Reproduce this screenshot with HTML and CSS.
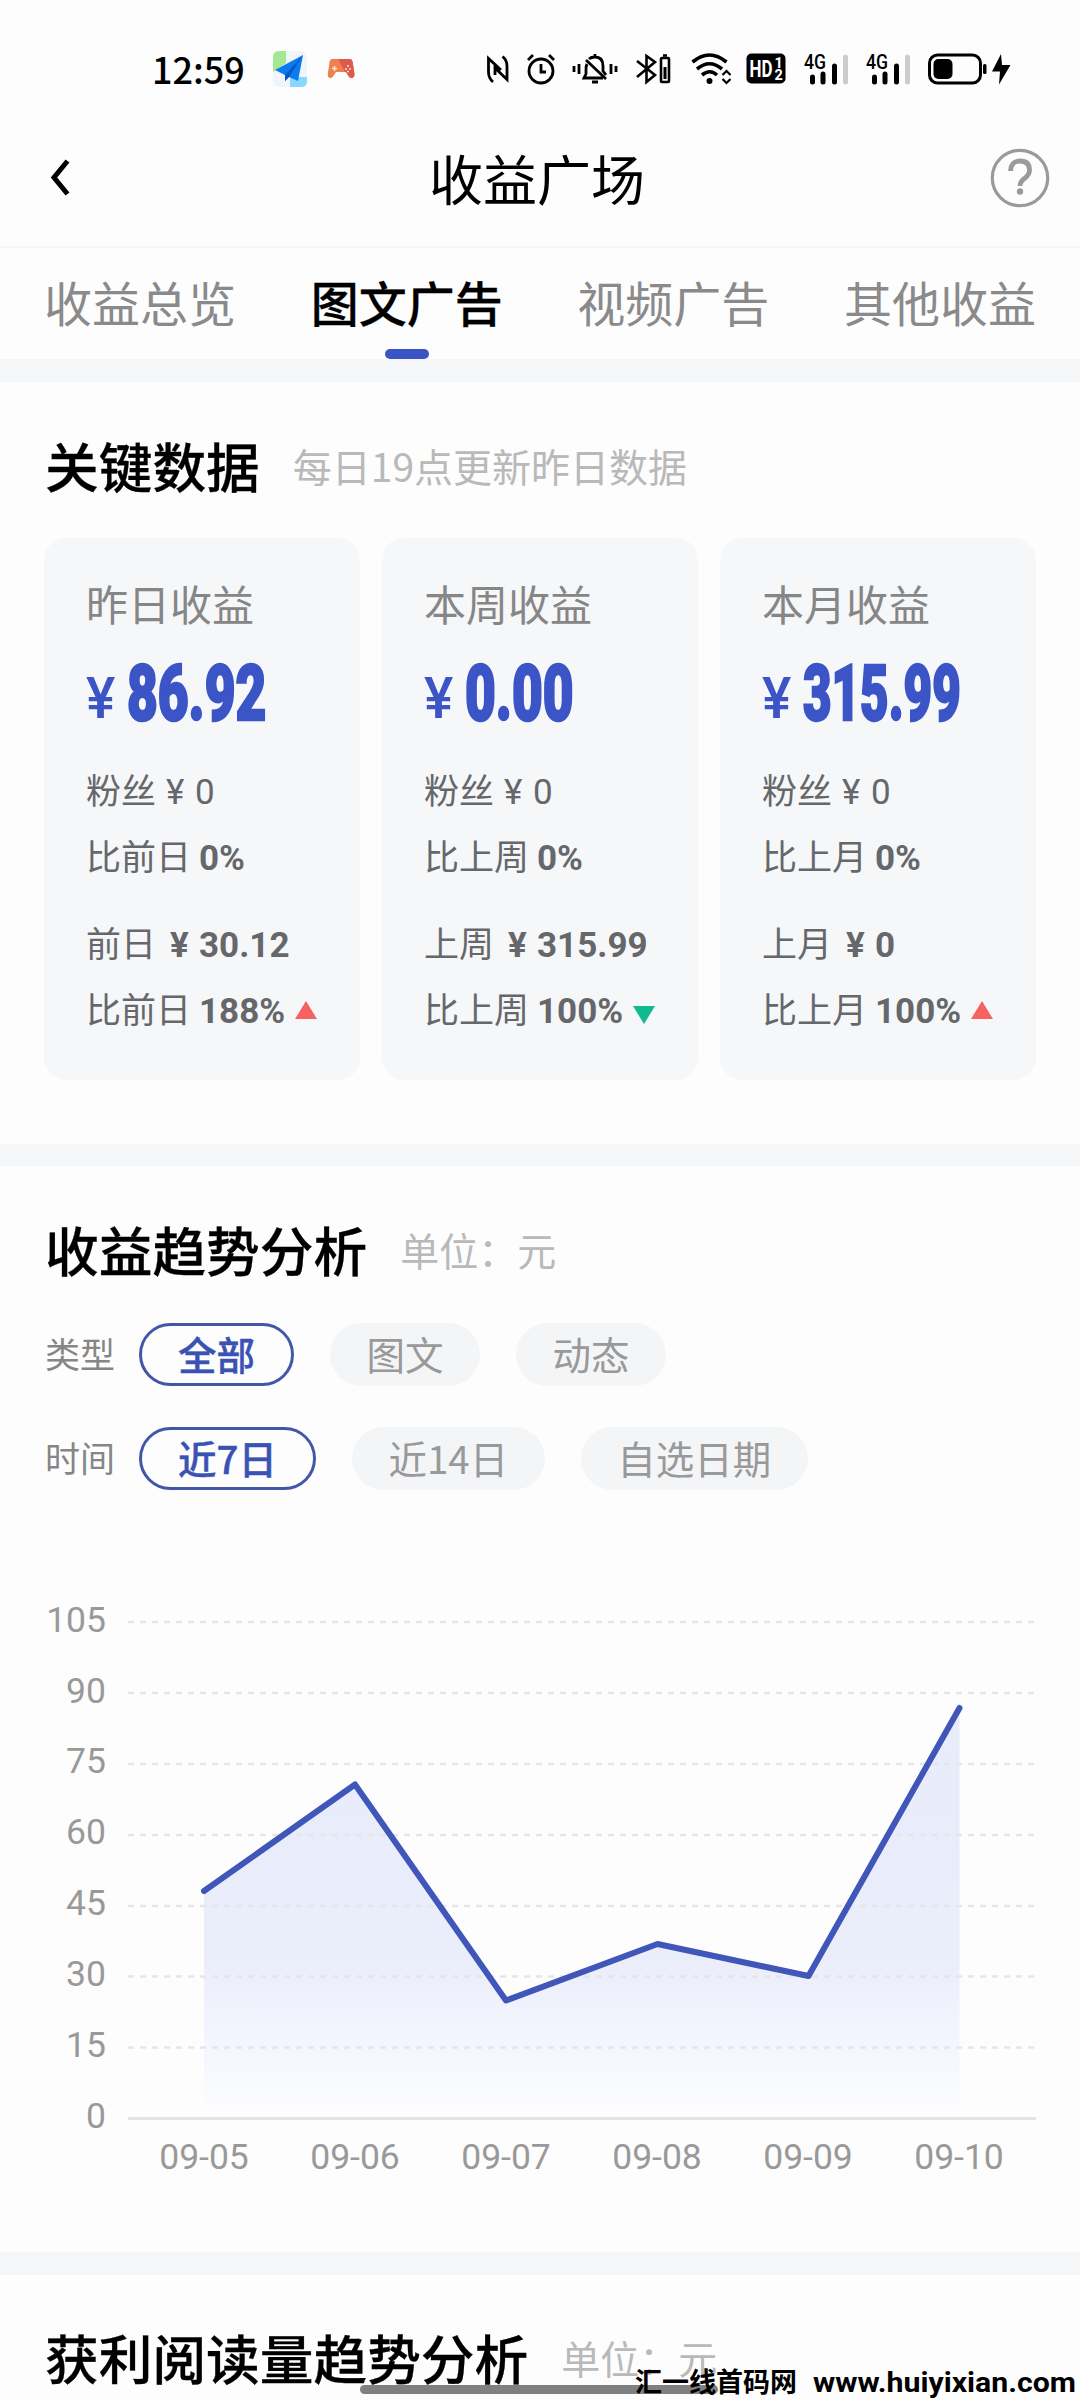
FILE: index.html
```html
<!DOCTYPE html>
<html lang="zh-CN">
<head>
<meta charset="utf-8">
<title>收益广场</title>
<link rel="stylesheet" href="styles.css">
</head>
<body>
<div class="screen">
  <div class="status">
    <span class="clock">12:59</span>
    <svg class="app-plane" width="36" height="38" viewBox="0 0 36 38">
      <rect x="1" y="1" width="34" height="36" rx="6" fill="#f1f5fa"/>
      <path d="M1 22V7q0-6 6-6h7v12z" fill="#a5e892"/>
      <path d="M18 37V27h17v4q0 6-6 6z" fill="#86d9fb"/>
      <path d="M31 5 3 20l10 5v6l4-4 9 4z" fill="#0d7bf0"/>
      <path d="M31 5 13 25v6l4-4z" fill="#0759c4"/>
    </svg>
    <svg class="app-game" width="28" height="22" viewBox="0 0 28 22">
      <path d="M5 1h18q2 0 2.600 2.500L27.500 16q0 4-3 4-2 0-3-2l-2.500-4H9l-3 4.500q-1 1.500-2.500 1.500Q.5 20 .8 16L2.600 3.500Q3 1 5 1z" fill="#ef8052"/>
      <path d="M11 1h12q2 0 2.600 2.500L27.500 16q0 4-3 4-2 0-3-2l-2.500-4h-1z" fill="#dc5a4e"/>
      <path d="M7.500 8v5M5 10.500h5" stroke="#ffe6c8" stroke-width="1.500"/>
      <path d="M20 8h2M18 11h2M22 11h2M20 13.500h2" stroke="#ffd9cf" stroke-width="1.500"/>
    </svg>
    <span class="spacer"></span>
    <svg class="s-nfc" width="22" height="30" viewBox="0 0 22 30" fill="none" stroke="#000" stroke-width="2.800">
      <path d="M6 28Q1.500 24 1.500 18V4.500L14 16M15.500 2.500Q20 6 20 12v13.500L8 14v7"/>
    </svg>
    <svg class="s-alarm" width="30" height="32" viewBox="0 0 30 32" fill="none" stroke="#000" stroke-width="2.800">
      <circle cx="15" cy="18" r="12"/><path d="M15 11v8h5M2 7l5-5M28 7l-5-5"/>
    </svg>
    <svg class="s-bell" width="46" height="32" viewBox="0 0 46 32" fill="none" stroke="#000" stroke-width="2.800">
      <path d="M2 13v6M7 11v10M44 13v6M39 11v10M23 1v4M17 6q2-2 6-2 8 0 8 9v5l3 4M15 11q-1 2-1 5v5l-2 4h19M14 7l20 19"/><path d="M20 29h6" stroke-width="3"/>
    </svg>
    <svg class="s-bt" width="36" height="32" viewBox="0 0 36 32" fill="none" stroke="#000" stroke-width="2.600">
      <path d="M2 8l18 14-8.500 7V3L20 9 2 24"/><rect x="26" y="5" width="8" height="24" rx="1"/><path d="M28 2.500h4"/><path d="M30 14v12" stroke-width="3"/>
    </svg>
    <svg class="s-wifi" width="40" height="32" viewBox="0 0 40 32" fill="none" stroke="#000" stroke-width="3.600">
      <path d="M1.500 9q17-14 34 0M6 16q12.500-10.500 25 0M11 22q8-6.500 15 0"/><circle cx="18.500" cy="28" r="3" fill="#000" stroke="none"/>
      <path d="M31.500 22l4-4 4 4M31.500 26l4 4 4-4" stroke-width="2.200"/>
    </svg>
    <svg class="s-hd" width="40" height="31" viewBox="0 0 40 31">
      <rect x=".5" y=".5" width="39" height="30" rx="5"/>
      <text x="3.500" y="24" class="hd" textLength="23" lengthAdjust="spacingAndGlyphs">HD</text>
      <text x="28.500" y="14.500" class="hd-n">1</text><text x="28.500" y="27" class="hd-n">2</text>
    </svg>
    <svg class="s-sig" width="46" height="32" viewBox="0 0 46 32">
      <text x="0" y="15.500" class="g4" textLength="22" lengthAdjust="spacingAndGlyphs">4G</text>
      <path d="M8.500 24v5M19 21v8M30.500 13v16" stroke="#000" stroke-width="5" stroke-linecap="round"/><path d="M41.500 4v25" stroke="#ccc" stroke-width="5" stroke-linecap="round"/>
    </svg>
    <svg class="s-sig2" width="46" height="32" viewBox="0 0 46 32">
      <text x="0" y="15.500" class="g4" textLength="22" lengthAdjust="spacingAndGlyphs">4G</text>
      <path d="M8.500 24v5M19 21v8M30.500 13v16" stroke="#000" stroke-width="5" stroke-linecap="round"/><path d="M41.500 4v25" stroke="#ccc" stroke-width="5" stroke-linecap="round"/>
    </svg>
    <svg class="s-bat" width="84" height="32" viewBox="0 0 84 32">
      <rect x="1.500" y="2" width="51" height="28" rx="8" fill="none" stroke="#000" stroke-width="3"/>
      <rect x="5.500" y="6" width="19" height="20" rx="5"/><rect x="55" y="11" width="3.500" height="10" rx="1.500"/>
      <path d="M73 1 64 18.500h8L71 31.500 82.500 12H74z"/>
    </svg>
  </div>

  <header class="appbar">
    <svg class="back" width="24" height="40" viewBox="0 0 24 40" fill="none" stroke="#000" stroke-width="5"><path d="M21.500 3 8 19.500 21.500 36"/></svg>
    <h1>收益广场</h1>
    <svg class="help" width="60" height="60" viewBox="0 0 60 60" fill="none" stroke="#9a9a9a">
      <circle cx="30" cy="30" r="27.700" stroke-width="3.200"/>
      <path d="M20.500 23q.5-10 9.500-10 9.500 0 9.500 9 0 4.500-4.500 8-5 3.500-5 8" stroke-width="4.800"/><circle cx="30" cy="43.500" r="3.200" fill="#9a9a9a" stroke="none"/>
    </svg>
  </header>

  <nav class="tabs">
    <span>收益总览</span><span class="on">图文广告</span><span>视频广告</span><span>其他收益</span>
  </nav>

  <section class="key">
    <div class="head"><h2>关键数据</h2><small>每日19点更新昨日数据</small></div>
    <div class="cards">
      <article class="card">
        <div class="label">昨日收益</div>
        <div class="amount"><i>¥</i><b>86.92</b></div>
        <div class="row r1"><span>粉丝</span><i>¥</i><em>0</em></div>
        <div class="row r2"><span>比前日</span><b>0%</b></div>
        <div class="row r3"><span>前日</span><i class="bold">¥</i><b>30.12</b></div>
        <div class="row r4"><span>比前日</span><b>188%</b><svg class="up" width="22" height="18" viewBox="0 0 22 18"><path d="M11 0 22 18H0z" fill="#f5625f"/></svg></div>
      </article>
      <article class="card">
        <div class="label">本周收益</div>
        <div class="amount"><i>¥</i><b>0.00</b></div>
        <div class="row r1"><span>粉丝</span><i>¥</i><em>0</em></div>
        <div class="row r2"><span>比上周</span><b>0%</b></div>
        <div class="row r3"><span>上周</span><i class="bold">¥</i><b>315.99</b></div>
        <div class="row r4"><span>比上周</span><b>100%</b><svg class="down" width="22" height="18" viewBox="0 0 22 18"><path d="M0 0H22L11 18z" fill="#0fba8f"/></svg></div>
      </article>
      <article class="card">
        <div class="label">本月收益</div>
        <div class="amount"><i>¥</i><b class="long">315.99</b></div>
        <div class="row r1"><span>粉丝</span><i>¥</i><em>0</em></div>
        <div class="row r2"><span>比上月</span><b>0%</b></div>
        <div class="row r3"><span>上月</span><i class="bold">¥</i><b>0</b></div>
        <div class="row r4"><span>比上月</span><b>100%</b><svg class="up" width="22" height="18" viewBox="0 0 22 18"><path d="M11 0 22 18H0z" fill="#f5625f"/></svg></div>
      </article>
    </div>
  </section>

  <section class="trend">
    <div class="head"><h2>收益趋势分析</h2><small>单位：元</small></div>
    <div class="filter"><label>类型</label><span class="pill on">全部</span><span class="pill">图文</span><span class="pill">动态</span></div>
    <div class="filter"><label>时间</label><span class="pill on">近7日</span><span class="pill">近14日</span><span class="pill">自选日期</span></div>
    <svg class="chart" width="1080" height="600" viewBox="0 1590 1080 600">
      <defs><linearGradient id="fade" x1="0" y1="1708" x2="0" y2="2118" gradientUnits="userSpaceOnUse">
        <stop offset="0" stop-color="#e8ecfb"/><stop offset=".6" stop-color="#eaedfa"/><stop offset=".8" stop-color="#f3f5fe"/><stop offset="1" stop-color="#fdfdfe"/>
      </linearGradient></defs>
      <path d="M204 1891 355 1784.500 506 2000.500 657.500 1944 808.500 1976 959.500 1708V2118H204z" fill="url(#fade)"/>
      <g class="grid">
        <path d="M128 1622H1036M128 1693H1036M128 1764H1036M128 1835H1036M128 1906H1036M128 1976.500H1036M128 2047.500H1036"/>
      </g>
      <path d="M128 2118.500H1036" stroke="#e2e3e5" stroke-width="3"/>
      <path d="M204 1891 355 1784.500 506 2000.500 657.500 1944 808.500 1976 959.500 1708" fill="none" stroke="#4056b8" stroke-width="6" stroke-linecap="round" stroke-linejoin="round"/>
      <g class="ylab">
        <text x="106" y="1632">105</text><text x="106" y="1703">90</text><text x="106" y="1773">75</text><text x="106" y="1844">60</text>
        <text x="106" y="1915">45</text><text x="106" y="1986">30</text><text x="106" y="2057">15</text><text x="106" y="2128">0</text>
      </g>
      <g class="xlab">
        <text x="204" y="2169">09-05</text><text x="355" y="2169">09-06</text><text x="506" y="2169">09-07</text>
        <text x="657" y="2169">09-08</text><text x="808" y="2169">09-09</text><text x="959" y="2169">09-10</text>
      </g>
    </svg>
  </section>

  <section class="reads">
    <div class="head"><h2>获利阅读量趋势分析</h2><small>单位：元</small></div>
  </section>

  <div class="homebar"></div>
  <div class="mark"><span>汇一线首码网</span><b>www.huiyixian.com</b></div>
</div>
</body>
</html>
```
FILE: styles.css
```css
* { box-sizing: border-box; margin: 0; padding: 0; }
html, body { width: 1080px; height: 2400px; overflow: hidden; }
body { background: #fdfdfd; font-family: "Noto Sans CJK SC", sans-serif; color: #000; }
svg { display: block; flex: none; overflow: visible; }
i, em { font-style: normal; }
.screen { position: relative; height: 2400px; overflow: hidden; }

/* status bar */
.status { height: 109px; padding: 28px 68px 0 152px; display: flex; align-items: center; }
.clock { padding-bottom: 2px; font-size: 36px; line-height: 1; font-weight: 500; }
.app-plane { margin-left: 27px; }
.app-game { margin-left: 19px; }
.spacer { flex: 1; }
.s-alarm { margin-left: 17px; }
.s-bell { margin-left: 16px; }
.s-bt { margin-left: 17px; }
.s-wifi { margin-left: 20px; }
.s-hd { margin-left: 15px; }
.s-sig { margin-left: 18px; }
.s-sig2 { margin-left: 16px; }
.s-bat { margin-left: 16px; }
.hd { font: 700 23px "Roboto", sans-serif; fill: #fff; }
.hd-n { font: 700 14.500px/1 "Roboto", sans-serif; fill: #fff; }
.g4 { font: 500 20px/1 "Roboto", sans-serif; }

/* title bar */
.appbar { height: 139px; padding: 0 30px 0 46px; display: flex; align-items: center; justify-content: space-between; border-bottom: 2px solid #f6f6f8; }
.appbar h1 { font-size: 54px; line-height: 60px; font-weight: 400; }
.back { margin-right: 14px; }

/* tabs */
.tabs { height: 111px; padding: 0 44px; display: flex; justify-content: space-between; }
.tabs span { position: relative; font-size: 48px; line-height: 106px; color: #8a8a8a; }
.tabs .on { color: #000; font-weight: 500; -webkit-text-stroke: .3px #000; }
.tabs .on::after { content: ""; position: absolute; left: 50%; bottom: 0; width: 44px; height: 10px; margin-left: -22px; border-radius: 5px; background: #3a54c4; }

/* sections */
section { padding: 53px 44px 0; }
.key { height: 785px; border-top: 23px solid #f5f6f8; }
.trend { height: 1108px; border-top: 22px solid #f5f6f8; padding-top: 53px; }
.reads { height: 148px; border-top: 23px solid #f5f6f8; padding-top: 52px; }
.head { height: 60px; display: flex; align-items: center; padding-left: 1px; }
.head h2 { font-size: 53.700px; line-height: 54px; font-weight: 500; -webkit-text-stroke: .3px #000; }
.head small { margin-left: 33px; font-size: 39px; line-height: 54px; color: #b9b9b9; }

/* summary cards */
.cards { margin-top: 43px; display: grid; grid-template-columns: repeat(3, 1fr); gap: 22px; }
.card { height: 542px; padding: 42px 0 0 42px; border-radius: 22px; background: #f5f7f9; }
.label { height: 50px; font-size: 42px; line-height: 46px; color: #868686; }
.amount { height: 60px; margin-top: 34px; display: flex; align-items: baseline; color: #3b54c6; font-family: "Roboto", sans-serif; line-height: 60px; }
.amount i { width: 41px; font-size: 58px; font-weight: 500; transform: translateY(-2px) scaleX(.95); transform-origin: 0 50%; }
.amount b { font-size: 77px; font-weight: 900; transform: scaleX(.69); transform-origin: 0 50%; width: 150px; -webkit-text-stroke: 2.500px #3b54c6; }
.amount .long { transform: scaleX(.64); }
.row { height: 40px; display: flex; align-items: baseline; font-size: 35px; line-height: 37px; color: #66676a; white-space: nowrap; }
.row i, .row em, .row b { font-family: "Roboto", sans-serif; }
.row b { font-weight: 700; margin-left: 8px; }
.row i { width: 29px; margin-left: 10px; }
.row i.bold { width: 21px; font-weight: 700; margin-left: 14px; }
.r1 { margin-top: 46px; }
.r2, .r4 { margin-top: 26px; }
.r3 { margin-top: 47px; }
.up, .down { margin-left: 10px; }
.up { transform: translateY(-4px); }
.down { transform: translateY(1px); }

/* filters */
.filter { height: 63px; margin-top: 41px; display: flex; align-items: center; gap: 36px; }
.filter:nth-child(2) { margin-top: 44px; }
.filter label { width: 95px; margin-right: -36px; padding-left: 1px; font-size: 35px; line-height: 40px; padding-bottom: 3px; color: #868686; }
.pill { height: 63px; padding: 0 36.500px; border-radius: 32px; background: #f4f5f7; color: #999; font-size: 38.500px; line-height: 61px; }
.pill.on { padding: 0 36px; border: 3px solid #4257a8; background: none; color: #3b52b5; font-weight: 500; line-height: 55px; -webkit-text-stroke: .4px #3b52b5; }

/* line chart */
.chart { margin: 100px 0 0 -44px; }
.chart text { font: 400 35.500px "Roboto", sans-serif; fill: #999; }
.grid { fill: none; stroke: #e5e6e8; stroke-width: 2.500; stroke-dasharray: 6 6; }
.ylab { text-anchor: end; }
.xlab { text-anchor: middle; }

/* overlays */
.homebar { position: absolute; left: 360px; top: 2385px; width: 358px; height: 9px; border-radius: 5px; background: #808080; }
.mark { position: absolute; left: 635px; top: 2363px; display: flex; align-items: baseline; gap: 16px; font-size: 27px; line-height: 36px; white-space: nowrap; }
.mark span { font-weight: 700; }
.mark b { font-family: "Roboto", sans-serif; transform: scaleX(1.12); transform-origin: 0 50%; }
```
